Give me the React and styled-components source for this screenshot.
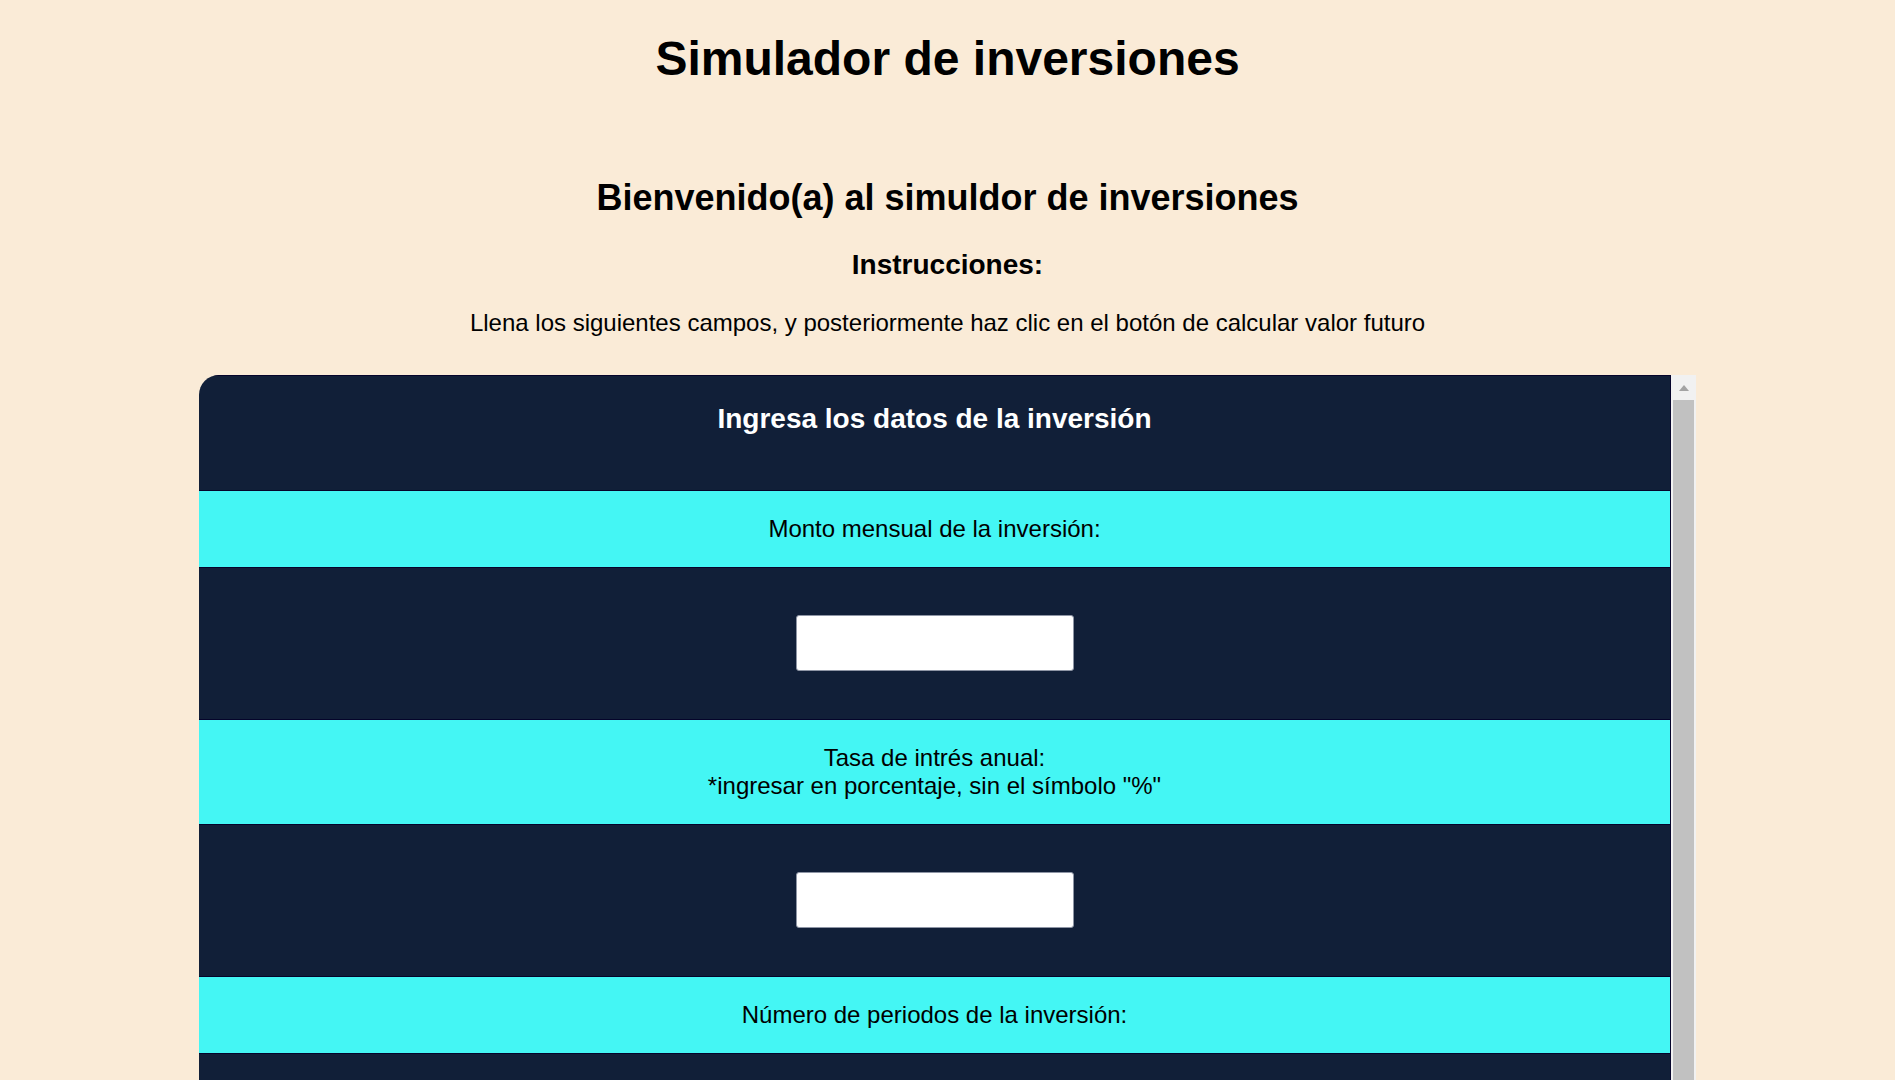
import React from "react";
import styled, { createGlobalStyle } from "styled-components";

const GlobalStyle = createGlobalStyle`
  html, body {
    margin: 0;
    padding: 0;
    overflow: hidden;
    background-color: #faebd7;
  }
  body {
    font-family: "Liberation Sans", Arial, sans-serif;
    color: #000;
  }
`;

const Page = styled.main`
  display: flex;
  flex-direction: column;
  align-items: center;
  height: 1080px;
  overflow: hidden;
`;

const Title = styled.h1`
  margin: 31px 0 0;
  font-size: 48px;
  line-height: 55px;
  font-weight: 700;
`;

const Welcome = styled.h2`
  margin: 91px 0 0;
  font-size: 36px;
  line-height: 41px;
  font-weight: 700;
`;

const Subtitle = styled.h3`
  margin: 31px 0 0;
  font-size: 28px;
  line-height: 32px;
  font-weight: 700;
`;

const Lead = styled.p`
  margin: 28px 0 0;
  font-size: 24px;
  line-height: 28px;
`;

// scroll box: content on the left, a drawn scrollbar on the right
const Panel = styled.section`
  display: flex;
  margin-top: 38px;
  width: 1497px;
  height: 705px;
  flex-shrink: 0;
`;

const Viewport = styled.div`
  flex: 1;
  overflow: hidden;
  border-top-left-radius: 20px;
`;

const ScrollTrack = styled.div`
  display: flex;
  flex-direction: column;
  width: 25px;
  background-color: #f1f1f1;
`;

const ScrollButton = styled.div`
  display: flex;
  align-items: center;
  justify-content: center;
  height: 25px;

  &::before {
    content: "";
    width: 0;
    height: 0;
    border-left: 5.5px solid transparent;
    border-right: 5.5px solid transparent;
    border-bottom: 6px solid #a3a3a3;
  }
`;

const ScrollThumb = styled.div`
  flex: 1;
  margin: 0 2px;
  background-color: #c1c1c1;
`;

const Form = styled.form`
  background-color: #111f38;
  border-top: 1px solid #05042b;
  border-right: 1px solid #05042b;
  min-height: 100%;
`;

const HeaderRow = styled.div`
  padding: 27px 0 55px;
  border-bottom: 1px solid #05042b;
  text-align: center;
`;

const HeaderText = styled.h3`
  margin: 0;
  color: #fff;
  font-size: 28px;
  line-height: 32px;
  font-weight: 700;
`;

const LabelRow = styled.div`
  padding: 24px 0;
  background-color: #44f6f4;
  border-bottom: 1px solid #05042b;
  text-align: center;
`;

const Label = styled.label`
  display: block;
  font-size: 24px;
  line-height: 28px;
  color: #000;
`;

const FieldRow = styled.div`
  display: flex;
  justify-content: center;
  padding: 47px 0 48px;
  border-bottom: 1px solid #05042b;
`;

const Input = styled.input`
  box-sizing: border-box;
  width: 278px;
  height: 56px;
  margin: 0;
  padding: 0 8px;
  background-color: #fff;
  border: 1px solid #8e95a5;
  border-radius: 3px;
  font-family: inherit;
  font-size: 24px;
`;

const fields = [
  { id: "monto", label: ["Monto mensual de la inversión:"] },
  {
    id: "tasa",
    label: [
      "Tasa de intrés anual:",
      '*ingresar en porcentaje, sin el símbolo "%"',
    ],
  },
  { id: "periodos", label: ["Número de periodos de la inversión:"] },
];

const App = () => {
  return (
    <>
      <GlobalStyle />
      <Page>
        <Title>Simulador de inversiones</Title>
        <Welcome>Bienvenido(a) al simuldor de inversiones</Welcome>
        <Subtitle>Instrucciones:</Subtitle>
        <Lead>
          Llena los siguientes campos, y posteriormente haz clic en el botón de
          calcular valor futuro
        </Lead>
        <Panel>
          <Viewport>
            <Form onSubmit={(e) => e.preventDefault()}>
              <HeaderRow>
                <HeaderText>Ingresa los datos de la inversión</HeaderText>
              </HeaderRow>
              {fields.map((field) => (
                <React.Fragment key={field.id}>
                  <LabelRow>
                    <Label htmlFor={field.id}>
                      {field.label.map((line, i) => (
                        <React.Fragment key={i}>
                          {i > 0 && <br />}
                          {line}
                        </React.Fragment>
                      ))}
                    </Label>
                  </LabelRow>
                  <FieldRow>
                    <Input id={field.id} type="text" />
                  </FieldRow>
                </React.Fragment>
              ))}
            </Form>
          </Viewport>
          <ScrollTrack>
            <ScrollButton />
            <ScrollThumb />
          </ScrollTrack>
        </Panel>
      </Page>
    </>
  );
};

export default App;
